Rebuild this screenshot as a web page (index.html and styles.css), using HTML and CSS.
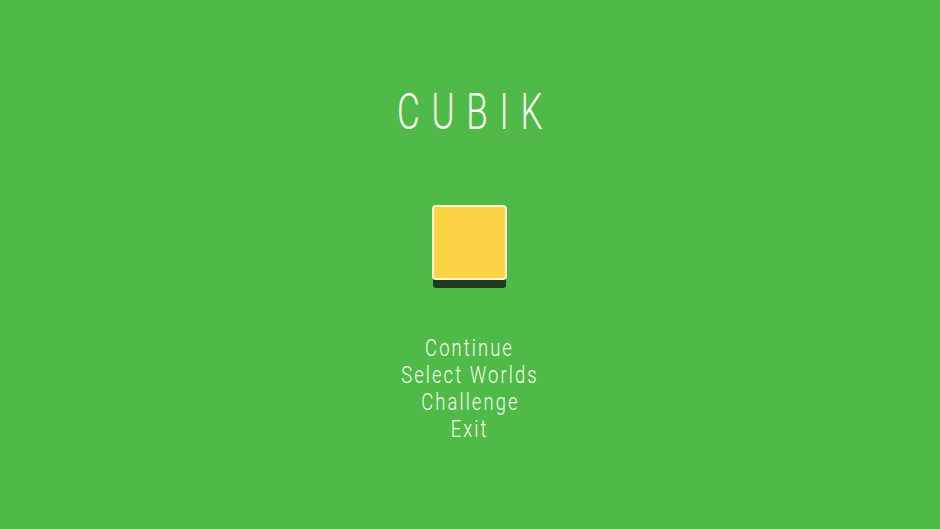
FILE: index.html
```html
<!DOCTYPE html>
<html>
<head>
<meta charset="utf-8">
<link rel="stylesheet" href="styles.css">
</head>
<body>
<main class="screen">
  <h1 class="title">CUBIK</h1>
  <div class="cube"></div>
  <nav class="menu">
    <div class="item">Continue</div>
    <div class="item">Select Worlds</div>
    <div class="item">Challenge</div>
    <div class="item">Exit</div>
  </nav>
</main>
</body>
</html>
```
FILE: styles.css
```css
html, body {
  margin: 0;
  height: 100%;
}
body {
  background: #4fba47;
  font-family: Roboto, "Liberation Sans", sans-serif;
  color: #f7fcef;
}
.screen {
  display: flex;
  flex-direction: column;
  align-items: center;
  height: 100%;
}
.title {
  margin: 84px 0 0;
  font-size: 50px;
  font-weight: 300;
  line-height: 56px;
  letter-spacing: 16.8px;
  padding-left: 16.8px;
  transform: scaleX(0.7);
}
.cube {
  margin-top: 65px;
  margin-right: 1px;
  width: 71px;
  height: 71px;
  background: #fdd244;
  border: 2px solid #f6f8cc;
  border-radius: 4px;
  box-shadow: 0 9px 0 -1px #1e3b1b;
}
.menu {
  margin-top: 55px;
  display: flex;
  flex-direction: column;
  align-items: center;
}
.item {
  font-size: 23px;
  font-weight: 300;
  line-height: 27px;
  letter-spacing: 2.6px;
  transform: scaleX(0.8);
}
```
